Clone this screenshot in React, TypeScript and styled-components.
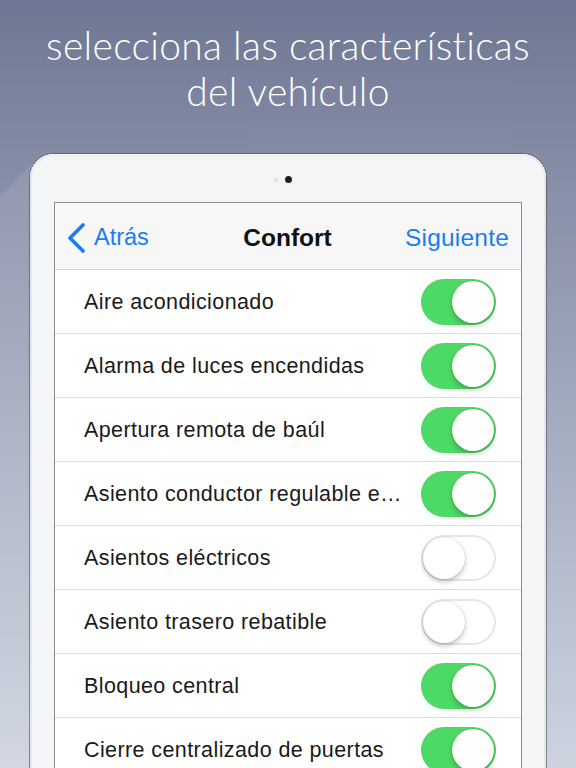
import React from "react";
import styled, { createGlobalStyle } from "styled-components";

const Global = createGlobalStyle`
  html, body { margin: 0; padding: 0; }
  body { width: 576px; height: 768px; overflow: hidden; }
  * { box-sizing: border-box; }
`;

const Page = styled.div`
  position: relative;
  width: 576px;
  height: 768px;
  overflow: hidden;
  background: linear-gradient(180deg, #6e7793 0%, #858ca6 22%, #a3abbf 55%, #cdd3df 100%);
  font-family: "Liberation Sans", Arial, sans-serif;
`;

const Diagonal = styled.div`
  position: absolute;
  left: 0;
  top: 0;
  width: 40px;
  height: 768px;
  background: rgba(255, 255, 255, 0.1);
  clip-path: polygon(0 196px, 32px 164px, 40px 164px, 40px 768px, 0 768px);
`;

const Title = styled.h1`
  margin: 0;
  padding-top: 22px;
  height: 154px;
  text-align: center;
  color: #ffffff;
  font-family: "Lato", "Open Sans", sans-serif;
  font-weight: 300;
  font-size: 39px;
  line-height: 46px;
  letter-spacing: 0.3px;
`;

const Device = styled.div`
  position: relative;
  margin-left: 30px;
  width: 516px;
  height: 640px;
  padding: 48px 24px 0 24px;
  background: #f4f5f7;
  border-radius: 24px 24px 0 0;
  box-shadow: 0 0 0 1px rgba(70, 74, 90, 0.6), inset 0 1px 0 #ffffff, inset 0 0 0 2px #e6e8ec;
`;

const CameraRow = styled.div`
  position: absolute;
  top: 22px;
  left: 0;
  right: 0;
  display: flex;
  justify-content: center;
  align-items: center;
  gap: 6.5px;
  padding-right: 10px;
`;

const Sensor = styled.span`
  width: 4px;
  height: 4px;
  border-radius: 50%;
  background: #e0e1e6;
`;

const Camera = styled.span`
  width: 7px;
  height: 7px;
  border-radius: 50%;
  background: #1e1f26;
`;

const Screen = styled.div`
  width: 468px;
  height: 600px;
  background: #ffffff;
  border: 1px solid #8c8c90;
  border-bottom: none;
  overflow: hidden;
`;

const NavBar = styled.div`
  height: 67px;
  background: #f7f7f8;
  border-bottom: 1px solid #cfcfd3;
  display: grid;
  grid-template-columns: 1fr auto 1fr;
  align-items: center;
  padding: 3px 12px 0 11px;
`;

const BackButton = styled.div`
  display: flex;
  align-items: center;
  gap: 8px;
  color: #1b7cf2;
  font-size: 23.5px;
`;

const NavTitle = styled.div`
  font-weight: 700;
  font-size: 24.5px;
  color: #111;
`;

const NextButton = styled.div`
  justify-self: end;
  color: #1b7cf2;
  font-size: 24.5px;
  letter-spacing: 0.2px;
`;

const Row = styled.div`
  height: 64px;
  display: flex;
  align-items: center;
  padding: 1px 25px 0 29px;
  border-bottom: 1px solid #dcdcdf;
`;

const Label = styled.div`
  flex: 1;
  min-width: 0;
  padding-right: 16px;
  font-size: 21.5px;
  letter-spacing: 0.4px;
  color: #1a1a1a;
  white-space: nowrap;
  overflow: hidden;
  text-overflow: ellipsis;
`;

const Switch = styled.div<{ $on: boolean }>`
  flex: none;
  position: relative;
  width: 75px;
  height: 46px;
  border-radius: 23px;
  background: ${(p) => (p.$on ? "#4cd964" : "#ffffff")};
  box-shadow: ${(p) => (p.$on ? "none" : "inset 0 0 0 2px #e6e6e8")};
`;

const Knob = styled.span<{ $on: boolean }>`
  position: absolute;
  top: 2px;
  left: ${(p) => (p.$on ? "31px" : "2px")};
  width: 42px;
  height: 42px;
  border-radius: 50%;
  background: #ffffff;
  box-shadow: 0 3px 5px rgba(0, 0, 0, 0.22), 0 0 0 0.5px rgba(0, 0, 0, 0.12);
`;

const items: [string, boolean][] = [
  ["Aire acondicionado", true],
  ["Alarma de luces encendidas", true],
  ["Apertura remota de baúl", true],
  ["Asiento conductor regulable eléctricamente", true],
  ["Asientos eléctricos", false],
  ["Asiento trasero rebatible", false],
  ["Bloqueo central", true],
  ["Cierre centralizado de puertas", true],
];

export default function App() {
  return (
    <Page>
      <Global />
      <Diagonal />
      <Title>
        selecciona las características
        <br />
        del vehículo
      </Title>
      <Device>
        <CameraRow>
          <Sensor />
          <Camera />
        </CameraRow>
        <Screen>
          <NavBar>
            <BackButton>
              <svg width="20" height="30" viewBox="0 0 20 30">
                <path d="M17 2 L4 15 L17 28" fill="none" stroke="#1b7cf2" strokeWidth="3.6" strokeLinecap="round" strokeLinejoin="round" />
              </svg>
              Atrás
            </BackButton>
            <NavTitle>Confort</NavTitle>
            <NextButton>Siguiente</NextButton>
          </NavBar>
          {items.map(([label, on]) => (
            <Row key={label}>
              <Label>{label}</Label>
              <Switch $on={on}>
                <Knob $on={on} />
              </Switch>
            </Row>
          ))}
        </Screen>
      </Device>
    </Page>
  );
}
